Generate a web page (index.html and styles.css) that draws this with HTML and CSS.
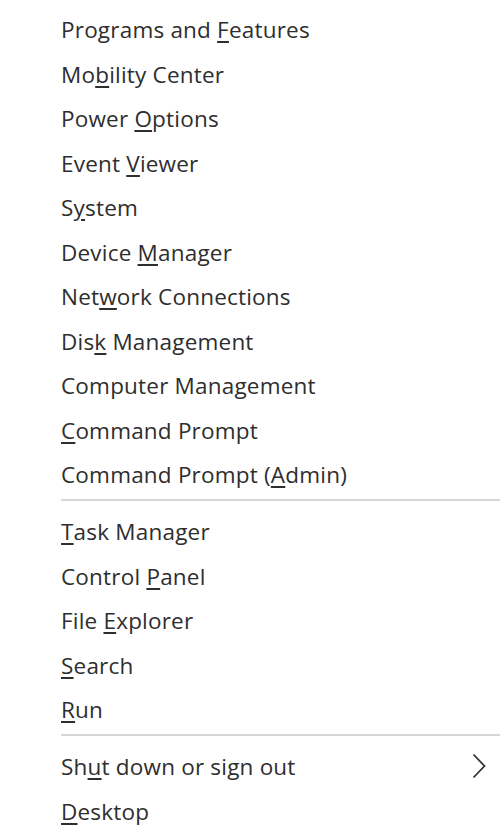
FILE: index.html
```html
<!DOCTYPE html>
<html lang="en">
<head>
<meta charset="utf-8">
<title>Quick Link Menu</title>
<link rel="stylesheet" href="styles.css">
</head>
<body>
<nav class="menu">
  <ul class="group">
    <li class="item">Programs and <u>F</u>eatures</li>
    <li class="item">Mo<u>b</u>ility Center</li>
    <li class="item">Power <u>O</u>ptions</li>
    <li class="item">Event <u>V</u>iewer</li>
    <li class="item">S<u>y</u>stem</li>
    <li class="item">Device <u>M</u>anager</li>
    <li class="item">Net<u>w</u>ork Connections</li>
    <li class="item">Dis<u>k</u> Management</li>
    <li class="item">Computer Mana<u>g</u>ement</li>
    <li class="item"><u>C</u>ommand Prompt</li>
    <li class="item">Command Prompt (<u>A</u>dmin)</li>
  </ul>
  <hr class="sep">
  <ul class="group">
    <li class="item"><u>T</u>ask Manager</li>
    <li class="item">Control <u>P</u>anel</li>
    <li class="item">File <u>E</u>xplorer</li>
    <li class="item"><u>S</u>earch</li>
    <li class="item"><u>R</u>un</li>
  </ul>
  <hr class="sep">
  <ul class="group">
    <li class="item item-sub"><span>Sh<u>u</u>t down or sign out</span>
      <svg class="chev" width="14" height="26" viewBox="0 0 14 26" aria-hidden="true"><path d="M1.5 1.5 L12.5 13 L1.5 24.5" fill="none" stroke="#333" stroke-width="1.8"/></svg>
    </li>
    <li class="item"><u>D</u>esktop</li>
  </ul>
</nav>
</body>
</html>
```
FILE: styles.css
```css
html, body {
  margin: 0;
  padding: 0;
  background: #ffffff;
}
body {
  font-family: "Open Sans", "Noto Sans", "Liberation Sans", sans-serif;
  color: #2e2e2e;
}
.menu {
  width: 500px;
  padding-top: 8px;
}
.group {
  list-style: none;
  margin: 0;
  padding: 0;
}
.item {
  height: 44.5px;
  line-height: 44.5px;
  font-size: 22.5px;
  letter-spacing: 0.2px;
  padding-left: 61px;
  white-space: nowrap;
}
.item u {
  text-decoration-thickness: 1.5px;
  text-underline-offset: 3px;
}
.item-sub {
  display: flex;
  align-items: center;
  justify-content: space-between;
  padding-right: 14px;
}
.chev {
  display: block;
  margin-top: -3px;
}
.sep {
  border: 0;
  height: 2px;
  background: #d6d6d6;
  margin: 1px 0 9.5px 61px;
}
```
